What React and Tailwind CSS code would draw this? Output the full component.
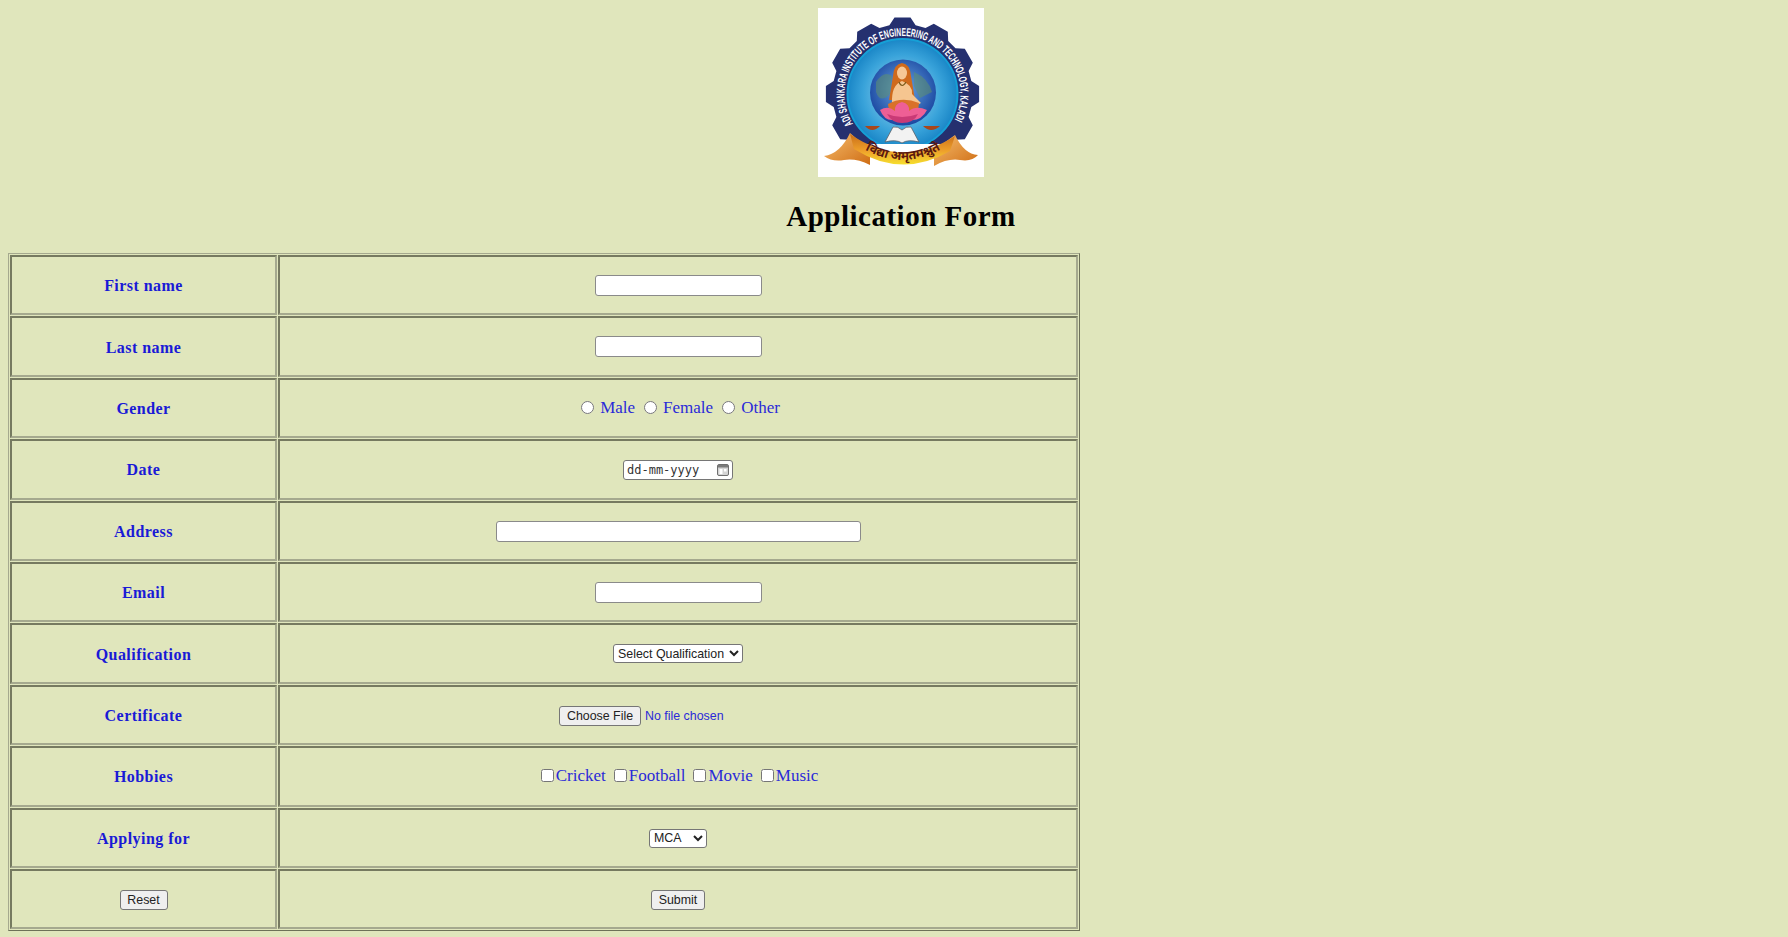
const gearPath = (() => {
  const cx = 84.5, cy = 86, n = 12, ro = 77, ri = 70;
  const pts = [];
  for (let i = 0; i < n; i++) {
    const a = (i / n) * Math.PI * 2 - Math.PI / 2;
    const s = (Math.PI * 2) / n;
    [[-0.36, ri], [-0.2, ro], [0.2, ro], [0.36, ri]].forEach(([k, r]) => {
      pts.push(`${(cx + r * Math.cos(a + k * s)).toFixed(1)},${(cy + r * Math.sin(a + k * s)).toFixed(1)}`);
    });
  }
  return pts.join(" ");
})();

function Logo() {
  return (
    <svg width="166" height="169" viewBox="0 0 166 169" className="block bg-white">
      <defs>
        <radialGradient id="inner" cx="50%" cy="50%" r="55%">
          <stop offset="0%" stopColor="#a9dcf2" />
          <stop offset="65%" stopColor="#39a3da" />
          <stop offset="100%" stopColor="#0f7cc0" />
        </radialGradient>
        <radialGradient id="globe" cx="50%" cy="45%" r="60%">
          <stop offset="0%" stopColor="#6aa8e0" />
          <stop offset="100%" stopColor="#143f9c" />
        </radialGradient>
        <linearGradient id="ribbon" x1="0" y1="0" x2="0" y2="1">
          <stop offset="0%" stopColor="#c96d18" />
          <stop offset="55%" stopColor="#eea02b" />
          <stop offset="100%" stopColor="#f6e02e" />
        </linearGradient>
        <linearGradient id="tail" x1="0" y1="0" x2="1" y2="1">
          <stop offset="0%" stopColor="#f6bd6d" />
          <stop offset="100%" stopColor="#cf6d14" />
        </linearGradient>
        <clipPath id="gearclip"><rect x="0" y="0" width="166" height="136" /></clipPath>
        <path id="arc" d="M 34.9 116 A 58 58 0 1 1 134.1 116" />
        <path id="motto" d="M 40 137 Q 84 167 130 137" />
      </defs>
      <g clipPath="url(#gearclip)">
        <polygon points={gearPath} fill="#25306f" />
        <circle cx="84.5" cy="86" r="55" fill="url(#inner)" stroke="#16a0d6" strokeWidth="2" />
      </g>
      <text fill="#ffffff" fontFamily="'Liberation Sans', sans-serif" fontWeight="700" fontSize="11.5">
        <textPath href="#arc" textLength="240" lengthAdjust="spacingAndGlyphs">ADI SHANKARA INSTITUTE OF ENGINEERING AND TECHNOLOGY, KALADI</textPath>
      </text>
      <circle cx="85" cy="84.5" r="33" fill="url(#globe)" />
      <path d="M58 74 Q66 62 74 68 L72 86 Q62 96 58 84 Z M96 64 Q110 70 114 84 L102 90 L96 78 Z" fill="#5f8f6e" opacity="0.55" />
      <path d="M84 55 Q76 56 75 68 L71 92 L97 92 L93 68 Q92 56 84 55 Z" fill="#cf6a1c" />
      <ellipse cx="84" cy="65" rx="5" ry="6.5" fill="#f6c795" />
      <path d="M74 96 Q73 77 84 73 Q95 77 94 86 L103 95 Q94 100 84 100 Z" fill="#f5c590" />
      <path d="M81 74 Q84 81 88 74" fill="none" stroke="#7a5a1a" strokeWidth="1.2" />
      <path d="M70 96 Q84 88 101 95 L100 103 L71 103 Z" fill="#d9712a" />
      <path d="M62 102 Q70 97 77 103 Q76 96 84 94 Q92 96 91 103 Q98 97 109 102 Q104 112 94 112 L74 112 Q66 112 62 102 Z" fill="#ee5f95" />
      <path d="M69 106 Q84 112 100 106 Q96 115 84 115 Q74 115 69 106 Z" fill="#c93a76" />
      <path d="M47 118 Q54 126 62 118 Z" fill="#a9471a" />
      <path d="M105 118 Q113 126 122 118 Z" fill="#a9471a" />
      <path d="M67 134 L75 119 Q80 118 84 122 Q88 118 93 119 L101 134 Q90 131 84 135 Q78 131 67 134 Z" fill="#f2f2f2" stroke="#59606a" strokeWidth="0.8" />
      <path d="M6 148 Q22 146 32 125 L52 142 L52 157 Q38 150 26 152 Q14 154 6 148 Z" fill="url(#tail)" />
      <path d="M160 147 Q146 146 137 127 L116 142 L116 158 Q130 150 142 152 Q154 154 160 147 Z" fill="url(#tail)" />
      <path d="M32 126 Q84 162 137 128 L132 143 Q84 171 36 141 Z" fill="url(#ribbon)" />
      <text fill="#5b1a10" fontSize="12.5" fontWeight="700" fontFamily="'Noto Sans', 'DejaVu Sans', sans-serif">
        <textPath href="#motto" startOffset="50%" textAnchor="middle">विद्या अमृतमश्नुते</textPath>
      </text>
    </svg>
  );
}

const labelCell = "h-[60.4px] border-2 border-t-[#767a60] border-l-[#767a60] border-b-[#a5a98e] border-r-[#a5a98e] text-center align-middle text-[16px] font-bold text-[#1a1ad6] tracking-[0.45px] pt-[2px] px-0 pb-0";
const valueCell = "h-[60.4px] border-2 border-t-[#767a60] border-l-[#767a60] border-b-[#a5a98e] border-r-[#a5a98e] text-center align-middle text-[17px] text-[#2a2ad8] p-0";
const textInput = "inline-block align-middle h-[21px] mb-[2px] bg-white border border-[#8a8a8a] rounded-[3px] px-[2px] text-[13.33px]";
const selectBox = "inline-block align-middle mb-[2px] bg-white border border-[#767676] rounded-[3px] text-[#222] text-[12.4px] font-['Liberation_Sans',sans-serif]";
const btn = "inline-block align-middle h-[20px] bg-[#efefef] border border-[#767676] rounded-[3px] text-[#222] text-[12.4px] tracking-normal font-['Liberation_Sans',sans-serif]";
const radio = "inline-block align-middle w-[13px] h-[13px] m-0";
const check = "inline-block align-middle w-[13px] h-[13px] m-0";

const Row = ({ label, children }) => (
  <tr>
    <td className={labelCell}>{label}</td>
    <td className={valueCell}>{children}</td>
  </tr>
);

export default function App() {
  return (
    <div className="min-h-[937px] bg-[#e0e6bc] font-['Liberation_Serif',serif] pt-2 px-2 text-black">
      <div className="flex flex-col items-center pl-[14px]">
        <Logo />
        <h1 className="mt-[21px] text-[29px] leading-[37px] font-bold text-black tracking-[0.5px]">Application Form</h1>
      </div>
      <table className="mt-[18px] w-[1072px] table-fixed border-separate border-spacing-[1px] border border-t-[#a5a98e] border-l-[#a5a98e] border-b-[#6d7158] border-r-[#6d7158]">
        <colgroup>
          <col className="w-[267px]" />
          <col />
        </colgroup>
        <tbody>
          <Row label="First name"><input type="text" className={`${textInput} w-[167px]`} /></Row>
          <Row label="Last name"><input type="text" className={`${textInput} w-[167px]`} /></Row>
          <Row label="Gender">
            <span className="inline-flex items-center justify-center gap-[6px] pl-[5px]">
              <input type="radio" name="g" className={radio} /><span className="mr-[3px]">Male</span>
              <input type="radio" name="g" className={radio} /><span className="mr-[3px]">Female</span>
              <input type="radio" name="g" className={radio} /><span>Other</span>
            </span>
          </Row>
          <Row label="Date">
            <span className="inline-flex items-center justify-between align-middle mb-[2px] w-[110px] h-[20px] bg-white border border-[#767676] rounded-[3px] text-[12px] text-[#333] font-['DejaVu_Sans_Mono',monospace] pl-[3px] pr-[3px]">
              <span>dd-mm-yyyy</span>
              <svg width="12" height="12" viewBox="0 0 12 12" className="shrink-0">
                <rect x="0.5" y="0.5" width="11" height="11" rx="1.5" fill="#d4d4d4" stroke="#6f6f6f" />
                <rect x="1" y="1" width="10" height="2.5" fill="#7a7a7a" />
                <rect x="2.5" y="5" width="3" height="5" fill="#ffffff" />
                <rect x="7" y="5" width="2.5" height="2.5" fill="#ffffff" />
              </svg>
            </span>
          </Row>
          <Row label="Address"><input type="text" className={`${textInput} w-[365px]`} /></Row>
          <Row label="Email"><input type="text" className={`${textInput} w-[167px]`} /></Row>
          <Row label="Qualification">
            <select className={`${selectBox} w-[130px] h-[19px]`}>
              <option>Select Qualification</option>
            </select>
          </Row>
          <Row label="Certificate">
            <span className="inline-flex items-center justify-start w-[238px] gap-[4px] text-[12.4px] font-['Liberation_Sans',sans-serif] text-[#2a2ad8]">
              <button type="button" className={`${btn} w-[82px]`}>Choose File</button>
              <span>No file chosen</span>
            </span>
          </Row>
          <Row label="Hobbies">
            <span className="inline-flex items-center justify-center pl-[3px]">
              <input type="checkbox" className={check} /><span className="ml-[2px] mr-[8px]">Cricket</span>
              <input type="checkbox" className={check} /><span className="ml-[2px] mr-[8px]">Football</span>
              <input type="checkbox" className={check} /><span className="ml-[2px] mr-[8px]">Movie</span>
              <input type="checkbox" className={check} /><span className="ml-[2px]">Music</span>
            </span>
          </Row>
          <Row label="Applying for">
            <select className={`${selectBox} w-[58px] h-[19px]`}>
              <option>MCA</option>
            </select>
          </Row>
          <Row label={<button type="button" className={`${btn} w-[48px] font-normal mb-[2px]`}>Reset</button>}>
            <button type="button" className={`${btn} w-[54px]`}>Submit</button>
          </Row>
        </tbody>
      </table>
    </div>
  );
}
